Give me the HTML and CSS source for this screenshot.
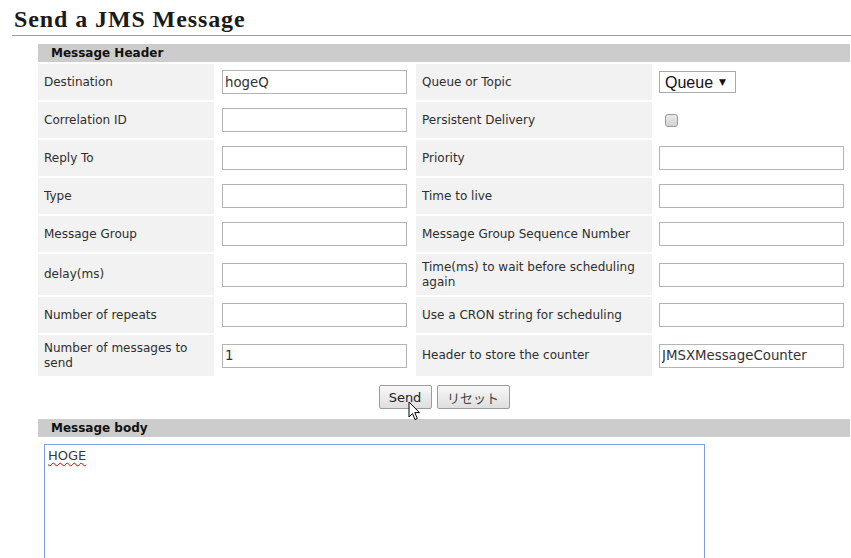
FILE: index.html
```html
<!DOCTYPE html>
<html lang="ja">
<head>
<meta charset="utf-8">
<title>Send a JMS Message</title>
<link rel="stylesheet" href="styles.css">
</head>
<body>
<h1 class="page-title">Send a JMS Message</h1>
<form class="send-form">
  <div class="section-bar">Message Header</div>
  <div class="field-grid">
    <div class="lbl">Destination</div>
    <div class="val"><input class="txt" type="text" value="hogeQ"></div>
    <div class="lbl">Queue or Topic</div>
    <div class="val val-r">
      <span class="select-box"><select class="sel"><option>Queue</option><option>Topic</option></select><span class="sel-arrow">▼</span></span>
    </div>

    <div class="lbl">Correlation ID</div>
    <div class="val"><input class="txt" type="text"></div>
    <div class="lbl">Persistent Delivery</div>
    <div class="val val-r"><input class="chk" type="checkbox"></div>

    <div class="lbl">Reply To</div>
    <div class="val"><input class="txt" type="text"></div>
    <div class="lbl">Priority</div>
    <div class="val val-r"><input class="txt" type="text"></div>

    <div class="lbl">Type</div>
    <div class="val"><input class="txt" type="text"></div>
    <div class="lbl">Time to live</div>
    <div class="val val-r"><input class="txt" type="text"></div>

    <div class="lbl">Message Group</div>
    <div class="val"><input class="txt" type="text"></div>
    <div class="lbl">Message Group Sequence Number</div>
    <div class="val val-r"><input class="txt" type="text"></div>

    <div class="lbl">delay(ms)</div>
    <div class="val"><input class="txt" type="text"></div>
    <div class="lbl">Time(ms) to wait before scheduling again</div>
    <div class="val val-r"><input class="txt" type="text"></div>

    <div class="lbl">Number of repeats</div>
    <div class="val"><input class="txt" type="text"></div>
    <div class="lbl">Use a CRON string for scheduling</div>
    <div class="val val-r"><input class="txt" type="text"></div>

    <div class="lbl">Number of messages to send</div>
    <div class="val"><input class="txt" type="text" value="1"></div>
    <div class="lbl">Header to store the counter</div>
    <div class="val val-r"><input class="txt" type="text" value="JMSXMessageCounter"></div>
  </div>

  <div class="actions">
    <span class="btn-wrap">
      <button class="btn btn-send" type="button">Send</button>
      <svg class="cursor" width="13" height="20" viewBox="0 0 13 20"><path d="M1 1 L1 16 L4.5 12.5 L7 18.5 L9.3 17.5 L6.8 11.6 L11.5 11.6 Z" fill="#fff" stroke="#000" stroke-width="1" stroke-linejoin="miter"/></svg>
    </span>
    <button class="btn btn-reset" type="reset">リセット</button>
  </div>

  <div class="section-bar">Message body</div>
  <div class="body-area" role="textbox" aria-multiline="true"><span class="spell">HOGE</span></div>
</form>
</body>
</html>
```

FILE: styles.css
```css
html, body {
  margin: 0;
  padding: 0;
  background: #fff;
  overflow: hidden;
}

body {
  font-family: "DejaVu Sans", Verdana, sans-serif;
  font-size: 12px;
  color: #333;
}

.page-title {
  margin: 0 0 0 12px;
  padding: 4px 0 0 2px;
  height: 31px;
  line-height: 31px;
  font-family: "Liberation Serif", "Times New Roman", serif;
  font-size: 24px;
  font-weight: bold;
  letter-spacing: 0.9px;
  color: #1a1a1a;
  border-bottom: 1px solid #a0a0a0;
}

.send-form {
  margin: 8px 0 0 38px;
  width: 812px;
}

.section-bar {
  height: 18px;
  line-height: 18px;
  background: #cccccc;
  padding-left: 13px;
  font-weight: bold;
  font-size: 12px;
  color: #111;
}

.field-grid {
  margin-top: 2px;
  display: grid;
  grid-template-columns: 176px 198px 236px 196px;
  gap: 2px;
}

.lbl {
  background: #f2f2f2;
  padding: 6px 6px;
  min-height: 36px;
  box-sizing: border-box;
  display: flex;
  align-items: center;
  line-height: 14.5px;
  color: #2e2e2e;
}

.val {
  background: #fff;
  padding: 0 6px;
  display: flex;
  align-items: center;
}

.val-r {
  padding-left: 5px;
}

.txt {
  width: 185px;
  height: 24px;
  box-sizing: border-box;
  margin: 0;
  border: 1px solid #b4b4b4;
  padding: 0 3px 0 2px;
  font-family: "DejaVu Sans", Verdana, sans-serif;
  font-size: 13.33px;
  color: #333;
  background: #fff;
  outline: none;
}

.select-box {
  display: inline-flex;
  align-items: center;
  height: 22px;
  width: 77px;
  box-sizing: border-box;
  border: 1px solid #a9a9a9;
  background: #fff;
}

.sel {
  appearance: none;
  -webkit-appearance: none;
  border: none;
  background: transparent;
  margin: 0;
  padding: 0 0 0 5px;
  height: 20px;
  width: 59px;
  font-family: "Liberation Sans", Arial, sans-serif;
  font-size: 16px;
  color: #111;
  outline: none;
}

.sel-arrow {
  font-family: "DejaVu Sans", sans-serif;
  font-size: 9px;
  color: #111;
}

.chk {
  appearance: none;
  -webkit-appearance: none;
  width: 13px;
  height: 13px;
  margin: 0 0 0 6px;
  border: 1px solid #9a9a9a;
  border-radius: 3px;
  background: linear-gradient(#e8e8e8, #d4d4d4);
  box-sizing: border-box;
}

.actions {
  margin-top: 9px;
  height: 24px;
  display: flex;
  justify-content: center;
  gap: 5px;
}

.btn-wrap {
  position: relative;
  display: inline-flex;
}

.btn {
  height: 24px;
  margin: 0;
  border: 1px solid #9c9c9c;
  border-radius: 2px;
  background: linear-gradient(#f8f8f8, #dedede);
  font-family: "DejaVu Sans", "Noto Sans CJK JP", sans-serif;
  font-size: 13px;
  color: #222;
  box-sizing: border-box;
}

.btn-send {
  width: 53px;
  padding: 0;
}

.btn-reset {
  width: 73px;
  padding: 0;
  color: #444;
}

.cursor {
  position: absolute;
  left: 29px;
  top: 16px;
}

.actions + .section-bar {
  margin-top: 10px;
}

.section-bar + .body-area {
  margin-top: 7px;
}

.body-area {
  margin-left: 6px;
  width: 661px;
  height: 200px;
  box-sizing: border-box;
  border: 1px solid #7b9fe0;
  padding: 3px 3px;
  font-family: "DejaVu Sans", Verdana, sans-serif;
  font-size: 13px;
  line-height: 16px;
  color: #3a3a3a;
}

.spell {
  text-decoration: underline wavy #e00000;
  text-decoration-thickness: 1px;
  text-underline-offset: 2px;
}
```
